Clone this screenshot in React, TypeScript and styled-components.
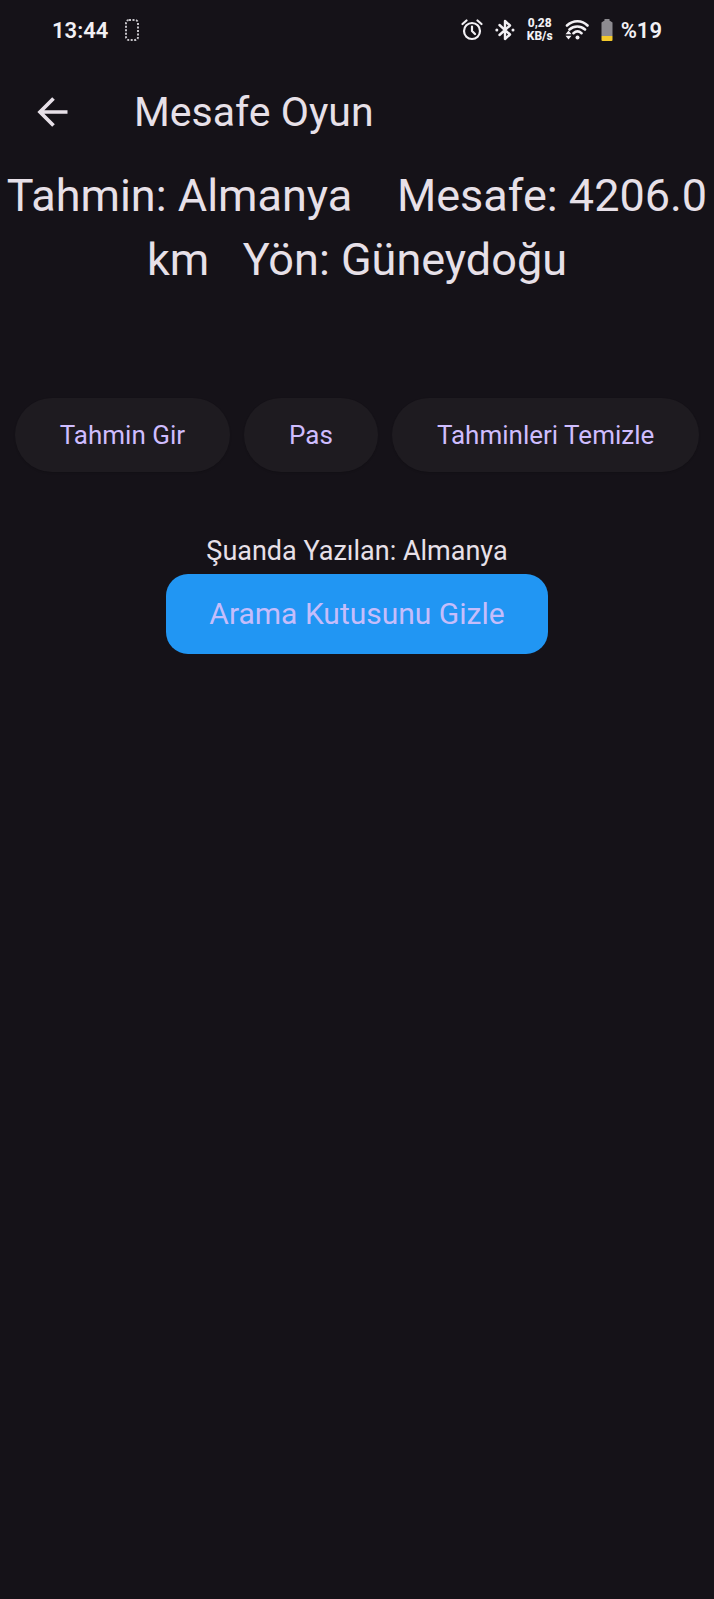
import React from 'react';
import styled, { createGlobalStyle } from 'styled-components';

const GlobalStyle = createGlobalStyle`
  * { box-sizing: border-box; }
  body {
    margin: 0;
    background: #151218;
    color: #e7e0e8;
    font-family: Roboto, "Noto Sans", sans-serif;
  }
`;

const Screen = styled.div`
  min-height: 100vh;
  display: flex;
  flex-direction: column;
`;

const StatusBar = styled.div`
  display: flex;
  align-items: center;
  justify-content: space-between;
  height: 60px;
  padding: 0 52px;
  color: #f2f0f4;
`;

const StatusGroup = styled.div<{ $gap: number }>`
  display: flex;
  align-items: center;
  gap: ${(p) => p.$gap}px;
`;

const StatusText = styled.span`
  padding-top: 2px;
  font-size: 22px;
  line-height: 28px;
  font-weight: 600;
`;

const BatteryGroup = styled.div`
  display: flex;
  align-items: center;
  gap: 8px;
`;

const NetSpeed = styled.span`
  font-size: 12px;
  line-height: 13px;
  font-weight: 800;
  text-align: center;
`;

const AppBar = styled.header`
  display: flex;
  align-items: center;
  gap: 64px;
  height: 104px;
  padding: 0 34px;
`;

const BackButton = styled.button`
  display: flex;
  padding: 0;
  border: 0;
  background: none;
  color: inherit;
  cursor: pointer;
`;

const Title = styled.h1`
  margin: 0;
  font-size: 41px;
  line-height: 52px;
  font-weight: 400;
`;

const Main = styled.main`
  display: flex;
  flex-direction: column;
  align-items: center;
`;

const Result = styled.p`
  margin: 0;
  font-size: 45px;
  line-height: 64px;
  text-align: center;
`;

const Actions = styled.div`
  display: flex;
  justify-content: center;
  gap: 14px;
  margin-top: 106px;
`;

const Pill = styled.button`
  height: 74px;
  padding: 0 45px;
  border: 0;
  border-radius: 37px;
  background: #1e1b20;
  box-shadow: 0 1px 2px rgba(0, 0, 0, 0.15);
  color: #cfbdfe;
  font: 400 26px/36px Roboto, "Noto Sans", sans-serif;
  white-space: nowrap;
  cursor: pointer;
`;

const Current = styled.p`
  margin: 60px 0 0;
  padding-bottom: 4px;
  font-size: 27px;
  line-height: 38px;
`;

const ToggleButton = styled.button`
  height: 80px;
  padding: 0 43px;
  border: 0;
  border-radius: 22px;
  background: #2196f3;
  color: #c5bdfb;
  font: 400 30px/40px Roboto, "Noto Sans", sans-serif;
  cursor: pointer;
`;

const DashedIcon = () => (
  <svg width="16" height="24" viewBox="0 0 16 24" fill="none" stroke="currentColor" strokeWidth="2" strokeDasharray="2 1.5" opacity="0.8" aria-hidden="true">
    <rect x="2" y="2" width="12" height="20" rx="3" />
  </svg>
);

const AlarmIcon = () => (
  <svg width="22" height="22" viewBox="0 0 22 22" fill="none" stroke="currentColor" strokeWidth="2.2" strokeLinecap="round" strokeLinejoin="round" aria-hidden="true">
    <circle cx="11" cy="12" r="8" />
    <path d="M11 7.5V12l3 3M1.5 5l4-3.500M20.500 5l-4-3.500" />
  </svg>
);

const BluetoothIcon = () => (
  <svg width="20" height="22" viewBox="0 0 20 22" fill="none" stroke="currentColor" strokeWidth="2.4" strokeLinejoin="round" strokeLinecap="round" aria-hidden="true">
    <path d="M4.500 6l10.500 9.500-5 4.500V2l5 4.500L4.500 16" />
    <circle cx="1.800" cy="11" r="1.500" fill="currentColor" stroke="none" />
    <circle cx="18" cy="11" r="1.500" fill="currentColor" stroke="none" />
  </svg>
);

const WifiIcon = () => (
  <svg width="24" height="22" viewBox="0 0 24 22" fill="none" stroke="currentColor" strokeWidth="2.6" strokeLinecap="round" aria-hidden="true">
    <path d="M2 6.500C8 .8 17 .8 22.500 6.500M4.500 10.500c4.500-4 11-4 15.500 0M8.500 14.200c2.500-2.200 5.500-2.200 8 0" />
    <circle cx="12.500" cy="18.500" r="2" fill="currentColor" stroke="none" />
    <path d="M.5 15.200l3-3.700 3 3.700zM.5 16.800l3 3.700 3-3.700z" fill="currentColor" stroke="none" />
  </svg>
);

const BatteryIcon = () => (
  <svg width="12" height="24" viewBox="0 0 12 24" aria-hidden="true">
    <path d="M3.500 2.500V1h5v1.500l3 2V18H.5V4.500z" fill="#8d8b90" />
    <path d="M.5 18h11v4q0 1-1 1h-9q-1 0-1-1z" fill="#f3c92c" />
  </svg>
);

const BackIcon = () => (
  <svg width="36" height="36" viewBox="0 0 36 36" fill="none" stroke="currentColor" strokeWidth="3.700" aria-hidden="true">
    <path d="M33.500 18H6M19.500 4.500L6 18l13.500 13.500" />
  </svg>
);

export default function App() {
  return (
    <Screen>
      <GlobalStyle />
      <StatusBar>
        <StatusGroup $gap={16}>
          <StatusText>13:44</StatusText>
          <DashedIcon />
        </StatusGroup>
        <StatusGroup $gap={12}>
          <AlarmIcon />
          <BluetoothIcon />
          <NetSpeed>0,28<br />KB/s</NetSpeed>
          <WifiIcon />
          <BatteryGroup>
            <BatteryIcon />
            <StatusText>%19</StatusText>
          </BatteryGroup>
        </StatusGroup>
      </StatusBar>
      <AppBar>
        <BackButton aria-label="Geri">
          <BackIcon />
        </BackButton>
        <Title>Mesafe Oyun</Title>
      </AppBar>
      <Main>
        <Result>{'Tahmin: Almanya\u00a0\u00a0\u00a0 Mesafe: 4206.0 km\u00a0\u00a0 Yön: Güneydoğu'}</Result>
        <Actions>
          <Pill>Tahmin Gir</Pill>
          <Pill>Pas</Pill>
          <Pill>Tahminleri Temizle</Pill>
        </Actions>
        <Current>Şuanda Yazılan: Almanya</Current>
        <ToggleButton>Arama Kutusunu Gizle</ToggleButton>
      </Main>
    </Screen>
  );
}
